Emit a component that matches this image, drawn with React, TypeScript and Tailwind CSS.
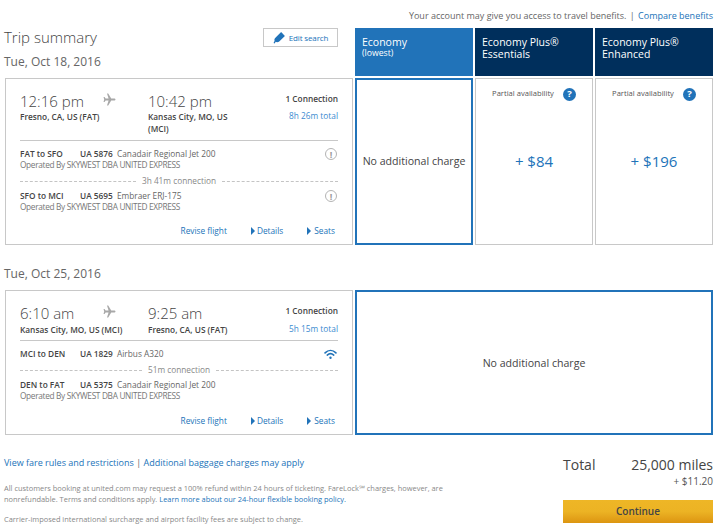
import React from "react";

const font = { fontFamily: '"Open Sans", sans-serif' };

function Plane() {
  return (
    <svg width="13" height="13" viewBox="0 0 24 24" className="text-[#a8a8a8]" fill="currentColor">
      <path d="M23 12c0-1-1-1.800-2.400-1.800h-5.400L9.600 1H7.400l2.900 9.200H4.800L2.800 7.400H1l1.200 4.600L1 16.600h1.800l2-2.800h5.500L7.400 23h2.200l5.600-9.200h5.400C22 13.800 23 13 23 12z" />
    </svg>
  );
}

function Warn() {
  return (
    <span className="w-[12px] h-[12px] rounded-full border border-[#b4b4b4] flex items-center justify-center text-[9px] leading-none font-bold text-[#9a9a9a]">!</span>
  );
}

function Wifi() {
  return (
    <svg width="13" height="11" viewBox="0 0 24 20" fill="none" stroke="#2173b9" strokeWidth="3" strokeLinecap="round">
      <path d="M2 7c6-6 14-6 20 0" />
      <path d="M6 11c4-3.500 8-3.500 12 0" />
      <circle cx="12" cy="16" r="2.200" fill="#2173b9" stroke="none" />
    </svg>
  );
}

function Tri() {
  return <span className="w-0 h-0 border-y-[4px] border-y-transparent border-l-[4px] border-l-[#2173b9]" />;
}

function Seg({ route, flight, plane, operated, icon }: { route: string; flight: string; plane: string; operated?: boolean; icon: React.ReactNode }) {
  return (
    <div>
      <div className="flex items-center h-[12px] text-[8.3px] leading-[12px]">
        <span className="w-[60px] font-semibold text-[#444]">{route}</span>
        <span className="w-[37px] font-semibold text-[#444]">{flight}</span>
        <span className="text-[#666]">{plane}</span>
        <span className="ml-auto mr-[1px]">{icon}</span>
      </div>
      {operated && <div className="text-[8.3px] leading-[10px] text-[#777] tracking-[-0.33px] whitespace-nowrap">Operated By SKYWEST DBA UNITED EXPRESS</div>}
    </div>
  );
}

function Conn({ text }: { text: string }) {
  return (
    <div className="flex items-center gap-[6px] h-[14px] text-[8.3px] text-[#888]">
      <span className="flex-1 border-t border-dashed border-[#c4c4c4]" />
      <span>{text}</span>
      <span className="flex-1 border-t border-dashed border-[#c4c4c4]" />
    </div>
  );
}

function Card({ h, dep, arr, depCity, arrCity, total, tall, children }: { h: string; dep: string; arr: string; depCity: string; arrCity: React.ReactNode; total: string; tall?: boolean; children: React.ReactNode }) {
  const cityGap = tall ? "" : "mt-[1px]";
  return (
    <div className={`${h} pt-[12px] border border-[#c8c8c8] px-[14px] flex flex-col`}>
      <div className={`flex ${tall ? "h-[49px]" : "h-[37px]"}`}>
        <div className="w-[83px]">
          <div className="text-[15px] leading-[20px] font-light text-[#444]">{dep}</div>
          <div className={`text-[8.3px] leading-[12px] font-semibold text-[#444] whitespace-nowrap ${cityGap}`}>{depCity}</div>
        </div>
        <div className="w-[45px] pt-[2px]"><Plane /></div>
        <div className="w-[100px]">
          <div className="text-[15px] leading-[20px] font-light text-[#444]">{arr}</div>
          <div className={`text-[8.3px] leading-[12px] font-semibold text-[#444] ${cityGap}`}>{arrCity}</div>
        </div>
        <div className="flex-1 text-right text-[8.3px]">
          <div className="leading-[14px] font-semibold text-[#444] pt-[1px]">1 Connection</div>
          <div className={`leading-[14px] ${tall ? "mt-[3px]" : "mt-[4px]"} text-[#3b8bd0]`}>{total}</div>
        </div>
      </div>
      <div className="border-t border-[#c8c8c8]" />
      {children}
    </div>
  );
}

function Actions() {
  return (
    <div className="flex justify-end items-center h-[14px] text-[8.3px] text-[#2173b9] mt-auto mb-[6px] pr-[3px]">
      <span>Revise flight</span>
      <span className="flex items-center gap-[2px] ml-[24px]"><Tri />Details</span>
      <span className="flex items-center gap-[3px] ml-[24px]"><Tri />Seats</span>
    </div>
  );
}

function Help() {
  return <span className="w-[13px] h-[13px] rounded-full bg-[#2173b9] text-white text-[9.500px] leading-none font-bold flex items-center justify-center">?</span>;
}

function Price({ gap, price }: { gap: string; price: string }) {
  return (
    <div className="h-[167px] border border-[#c8c8c8] flex flex-col items-center">
      <div className={`flex items-center h-[14px] mt-[8px] text-[7.600px] text-[#555] ${gap}`}>
        <span>Partial availability</span>
        <Help />
      </div>
      <div className="mt-[50px] text-[15px] leading-[20px] text-[#2173b9]">{price}</div>
    </div>
  );
}

export default function App() {
  return (
    <div style={font} className="w-[720px] h-[531px] overflow-hidden bg-white relative">
      <div className="h-[28px] pr-[7px] pt-[9px] text-right text-[9px] leading-[14px] text-[#666]">
        Your account may give you access to travel benefits. <span className="mx-[1px]">|</span> <span className="text-[#2173b9]">Compare benefits</span>
      </div>
      <div className="pl-[5px] grid grid-cols-[348px_118px_118px_118px] gap-x-[2px]">
        <div className="h-[48px] relative -ml-[1px]">
          <div className="text-[15px] leading-[20px] font-light text-[#444] -mt-[1px]">Trip summary</div>
          <div className="text-[12px] leading-[16px] mt-[7px] text-[#666]">Tue, Oct 18, 2016</div>
          <div className="absolute right-[15px] top-0 w-[75px] h-[19px] border border-[#c8c8c8] flex items-center justify-center gap-[3px] text-[8px] tracking-[-0.15px] text-[#2173b9]">
            <svg width="13" height="13" viewBox="0 0 24 24" fill="#2173b9"><path d="M15 2l7 7-11 11c-2 1-5 1-6 0L3 23l-2-1 2-4c-1-2 0-4 1-5L15 2z" /></svg>
            Edit search
          </div>
        </div>
        <div className="h-[48px] bg-[#2173b9] text-white px-[7px] pt-[8px]">
          <div className="text-[10.500px] leading-[12px]">Economy</div>
          <div className="text-[8.700px] leading-[10px]">(lowest)</div>
        </div>
        <div className="h-[48px] bg-[#002f5c] text-white px-[7px] pt-[8px] text-[10.500px] leading-[12px]">Economy Plus®<br />Essentials</div>
        <div className="h-[48px] bg-[#002f5c] text-white px-[7px] pt-[8px] text-[10.500px] leading-[12px]">Economy Plus®<br />Enhanced</div>

        <div className="mt-[2px]">
          <Card h="h-[167px]" dep="12:16 pm" arr="10:42 pm" depCity="Fresno, CA, US (FAT)" arrCity={<>Kansas City, MO, US<br />(MCI)</>} total="8h 26m total" tall>
            <div className="mt-[7px]"><Seg route="FAT to SFO" flight="UA 5876" plane="Canadair Regional Jet 200" operated icon={<Warn />} /></div>
            <div className="mt-[4px]"><Conn text="3h 41m connection" /></div>
            <div className="mt-[2px]"><Seg route="SFO to MCI" flight="UA 5695" plane="Embraer ERJ-175" operated icon={<Warn />} /></div>
            <Actions />
          </Card>
        </div>
        <div className="mt-[2px] h-[167px] border-2 border-[#2173b9] flex items-center justify-center text-[10.600px] text-[#444]">No additional charge</div>
        <div className="mt-[2px]"><Price gap="gap-[9px]" price="+ $84" /></div>
        <div className="mt-[2px]"><Price gap="gap-[9px]" price="+ $196" /></div>

        <div className="col-span-4 -ml-[1px] h-[45px] flex items-center text-[12px] leading-[16px] text-[#666] pt-[13px]">Tue, Oct 25, 2016</div>

        <Card h="h-[145px]" dep="6:10 am" arr="9:25 am" depCity="Kansas City, MO, US (MCI)" arrCity="Fresno, CA, US (FAT)" total="5h 15m total">
          <div className="mt-[7px]"><Seg route="MCI to DEN" flight="UA 1829" plane="Airbus A320" icon={<Wifi />} /></div>
          <div className="mt-[3px]"><Conn text="51m connection" /></div>
          <div className="mt-[2px]"><Seg route="DEN to FAT" flight="UA 5375" plane="Canadair Regional Jet 200" operated icon={null} /></div>
          <Actions />
        </Card>
        <div className="col-span-3 h-[145px] border-2 border-[#2173b9] flex items-center justify-center pt-[2px] text-[10.600px] text-[#444]">No additional charge</div>
      </div>

      <div className="flex pl-[4px] pr-[7px] mt-[16px]">
        <div className="flex-1">
          <div className="text-[9px] leading-[14px] mt-[5px] text-[#2173b9]">View fare rules and restrictions <span className="text-[#666]">|</span> Additional baggage charges may apply</div>
          <div className="text-[7.450px] leading-[11px] text-[#888] mt-[13px] w-[450px]">
            All customers booking at united.com may request a 100% refund within 24 hours of ticketing. FareLock℠ charges, however, are nonrefundable. Terms and conditions apply. <span className="font-medium text-[#2173b9]">Learn more about our 24-hour flexible booking policy.</span>
          </div>
          <div className="text-[7.450px] leading-[11px] text-[#888] mt-[9px]">Carrier-imposed international surcharge and airport facility fees are subject to change.</div>
        </div>
        <div className="w-[150px] pt-[4px]">
          <div className="flex justify-between items-center h-[19px] text-[14px] font-medium text-[#444]"><span>Total</span><span>25,000 miles</span></div>
          <div className="text-right text-[10px] leading-[14px] text-[#555]">+ $11.20</div>
          <div className="mt-[12px] h-[23px] bg-gradient-to-b from-[#eeb626] via-[#ecb324] to-[#dc9510] flex items-center justify-center text-[10px] font-semibold text-[#444]">Continue</div>
        </div>
      </div>
    </div>
  );
}
